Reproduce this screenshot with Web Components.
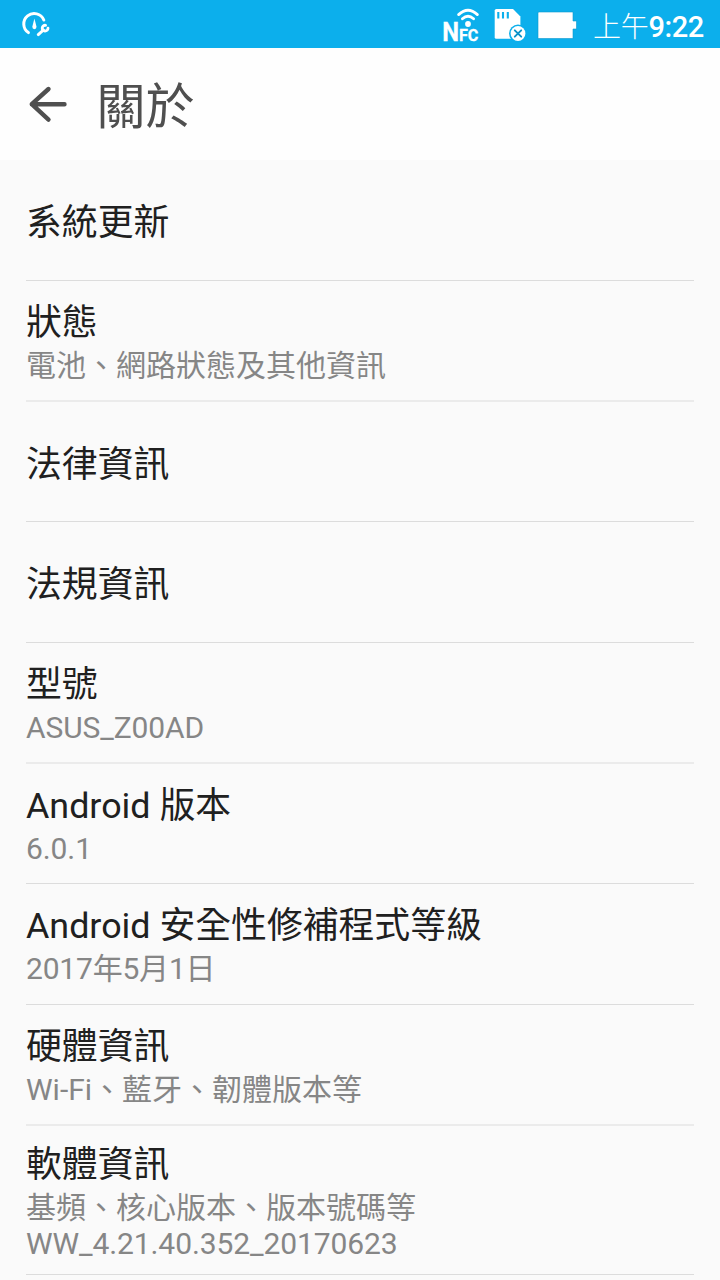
<!DOCTYPE html>
<html lang="zh-Hant">
<head>
<meta charset="utf-8">
<title>關於</title>
<style>
html, body { margin: 0; height: 1280px; overflow: hidden; background: #fafafa; }
body { font-family: Roboto, "Noto Sans CJK TC", sans-serif; }
</style>
</head>
<body>
<about-screen></about-screen>
<script>
const define = (name, html) => customElements.define(name, class extends HTMLElement {
  constructor() {
    super();
    this.attachShadow({ mode: 'open' }).innerHTML = html;
  }
});

define('nfc-icon', `<style>:host{display:block;width:38px;height:48px}svg{display:block}text{font-family:Roboto,sans-serif;font-weight:700;fill:#fff;stroke:#fff;stroke-width:.3px}</style>
<svg width="38" height="48" viewBox="442 0 38 48">
  <text x="442.2" y="40.7" font-size="25.8" textLength="16.8" lengthAdjust="spacingAndGlyphs">N</text>
  <text x="459" y="40.7" font-size="16.8" textLength="19.4" lengthAdjust="spacingAndGlyphs">FC</text>
  <circle cx="468" cy="24" r="2.9" fill="#fff"/>
  <g fill="none" stroke="#fff" stroke-width="2.8" stroke-linecap="round"><path d="M458.6 14.6Q468 6 477.4 14.6"/><path d="M462.4 18.8Q468 13.8 473.6 18.8"/></g>
</svg>`);

define('sd-icon', `<style>:host{display:block;width:34px;height:48px}svg{display:block}</style>
<svg width="34" height="48" viewBox="493 0 34 48">
  <path d="M496.4 9H513L520.4 16.6V38.8H496.4Q494.7 38.8 494.7 37.2V10.6Q494.7 9 496.4 9Z" fill="#fff"/>
  <path d="M498.3 12V18.6M503 12V18.6M507.8 12V18.6" stroke="#0cafec" stroke-width="2.1"/>
  <circle cx="518" cy="33.5" r="9" fill="#0cafec"/>
  <circle cx="518" cy="33.5" r="7.4" fill="#fff"/>
  <path d="M514.8 30.3L521.2 36.7M521.2 30.3L514.8 36.7" stroke="#0c93c9" stroke-width="1.9" stroke-linecap="round"/>
</svg>`);

define('battery-icon', `<style>:host{display:block;width:40px;height:48px}svg{display:block}</style>
<svg width="40" height="48" viewBox="537 0 40 48"><path d="M539 12H573V21H576.5V29H573V38.5H538V13Q538 12 539 12Z" fill="#fff" stroke="#0a97cf" stroke-width=".6"/></svg>`);

define('tuner-icon', `<style>:host{display:block;width:30px;height:48px}svg{display:block}</style>
<svg width="30" height="48" viewBox="21 0 30 48">
  <path d="M28.4 32.6A10.4 10.4 0 1 1 43.8 20" fill="none" stroke="#fff" stroke-width="3" stroke-linecap="round"/>
  <path d="M34.4 18.6L36.5 26.8Q36.5 29.2 34.4 29.2T32.3 26.8Z" fill="#fff"/>
  <path d="M38.3 34.6L43.4 30" stroke="#fff" stroke-width="3" stroke-linecap="round"/>
  <path d="M45.6 25.3A2.9 2.9 0 1 0 48 28.2" fill="none" stroke="#fff" stroke-width="2.8" stroke-linecap="round"/>
</svg>`);

define('status-bar', `<style>
:host{display:flex;align-items:center;height:48px;background:#0cafec;color:#fff;padding:0 16px 0 21px;box-sizing:border-box}
.gap{flex:1}
sd-icon{margin-left:13px}battery-icon{margin-left:10px}
.time{display:flex;align-items:baseline;width:111px;height:48px;margin-left:16px;padding-top:3px;box-sizing:border-box;white-space:nowrap;line-height:48px;font-size:29px}
.ap{font-weight:300;font-size:28px;letter-spacing:-.2px}
.num{font-weight:500;font-size:29px;letter-spacing:-.5px}
</style>
<tuner-icon></tuner-icon><span class="gap"></span><nfc-icon></nfc-icon><sd-icon></sd-icon><battery-icon></battery-icon>
<div class="time"><span class="ap">上午</span><span class="num">9:22</span></div>`);

define('title-bar', `<style>
:host{display:flex;align-items:center;height:112px;box-sizing:border-box;padding-left:28px;background:#fefefe;color:#4f4f4f}
svg{display:block;margin-right:28.5px}
h1{margin:0;padding-top:8px;font-size:49px;font-weight:400;line-height:104px}
</style>
<svg width="40" height="40" viewBox="0 0 40 40"><path d="M20.5 5L3.8 20.2L20.5 35.6M3.8 20.2H36.5" fill="none" stroke="#4f4f4f" stroke-width="4.4" stroke-linecap="round" stroke-linejoin="round"/></svg>
<h1><slot></slot></h1>`);

define('setting-row', `<style>
:host{display:block;box-sizing:border-box;height:var(--h,121px);padding-top:18px;margin:0 26px;border-bottom:1px solid #dcdcdc}
:host([single]){padding-top:39px}
:host([tall]){padding-top:15px}
:host([soft]){border-bottom:2px solid #ebebeb}
.t{font-size:35.85px;line-height:48px;color:#202020;white-space:nowrap}
.s{margin-top:1px;font-size:30px;line-height:36px;color:#868686;white-space:nowrap}
::slotted([slot=summary]){display:block}
::slotted(.latin){letter-spacing:-.1px}
::slotted(.date){letter-spacing:-.2px}
</style>
<div class="t"><slot></slot></div><div class="s"><slot name="summary"></slot></div>`);

define('about-screen', `<style>
:host{display:block;width:720px;height:1280px;overflow:hidden;background:#fafafa}
</style>
<status-bar></status-bar>
<title-bar>關於</title-bar>
<main>
<setting-row single>系統更新</setting-row>
<setting-row soft>狀態<span slot="summary">電池、網路狀態及其他資訊</span></setting-row>
<setting-row single style="--h:120px">法律資訊</setting-row>
<setting-row single>法規資訊</setting-row>
<setting-row soft>型號<span slot="summary" class="latin">ASUS_Z00AD</span></setting-row>
<setting-row style="--h:120px">Android 版本<span slot="summary" class="latin">6.0.1</span></setting-row>
<setting-row>Android 安全性修補程式等級<span slot="summary" class="date">2017年5月1日</span></setting-row>
<setting-row soft>硬體資訊<span slot="summary">Wi-Fi、藍牙、韌體版本等</span></setting-row>
<setting-row tall style="--h:149px">軟體資訊<span slot="summary">基頻、核心版本、版本號碼等</span><span slot="summary" class="latin">WW_4.21.40.352_20170623</span></setting-row>
</main>`);
</script>
</body>
</html>
